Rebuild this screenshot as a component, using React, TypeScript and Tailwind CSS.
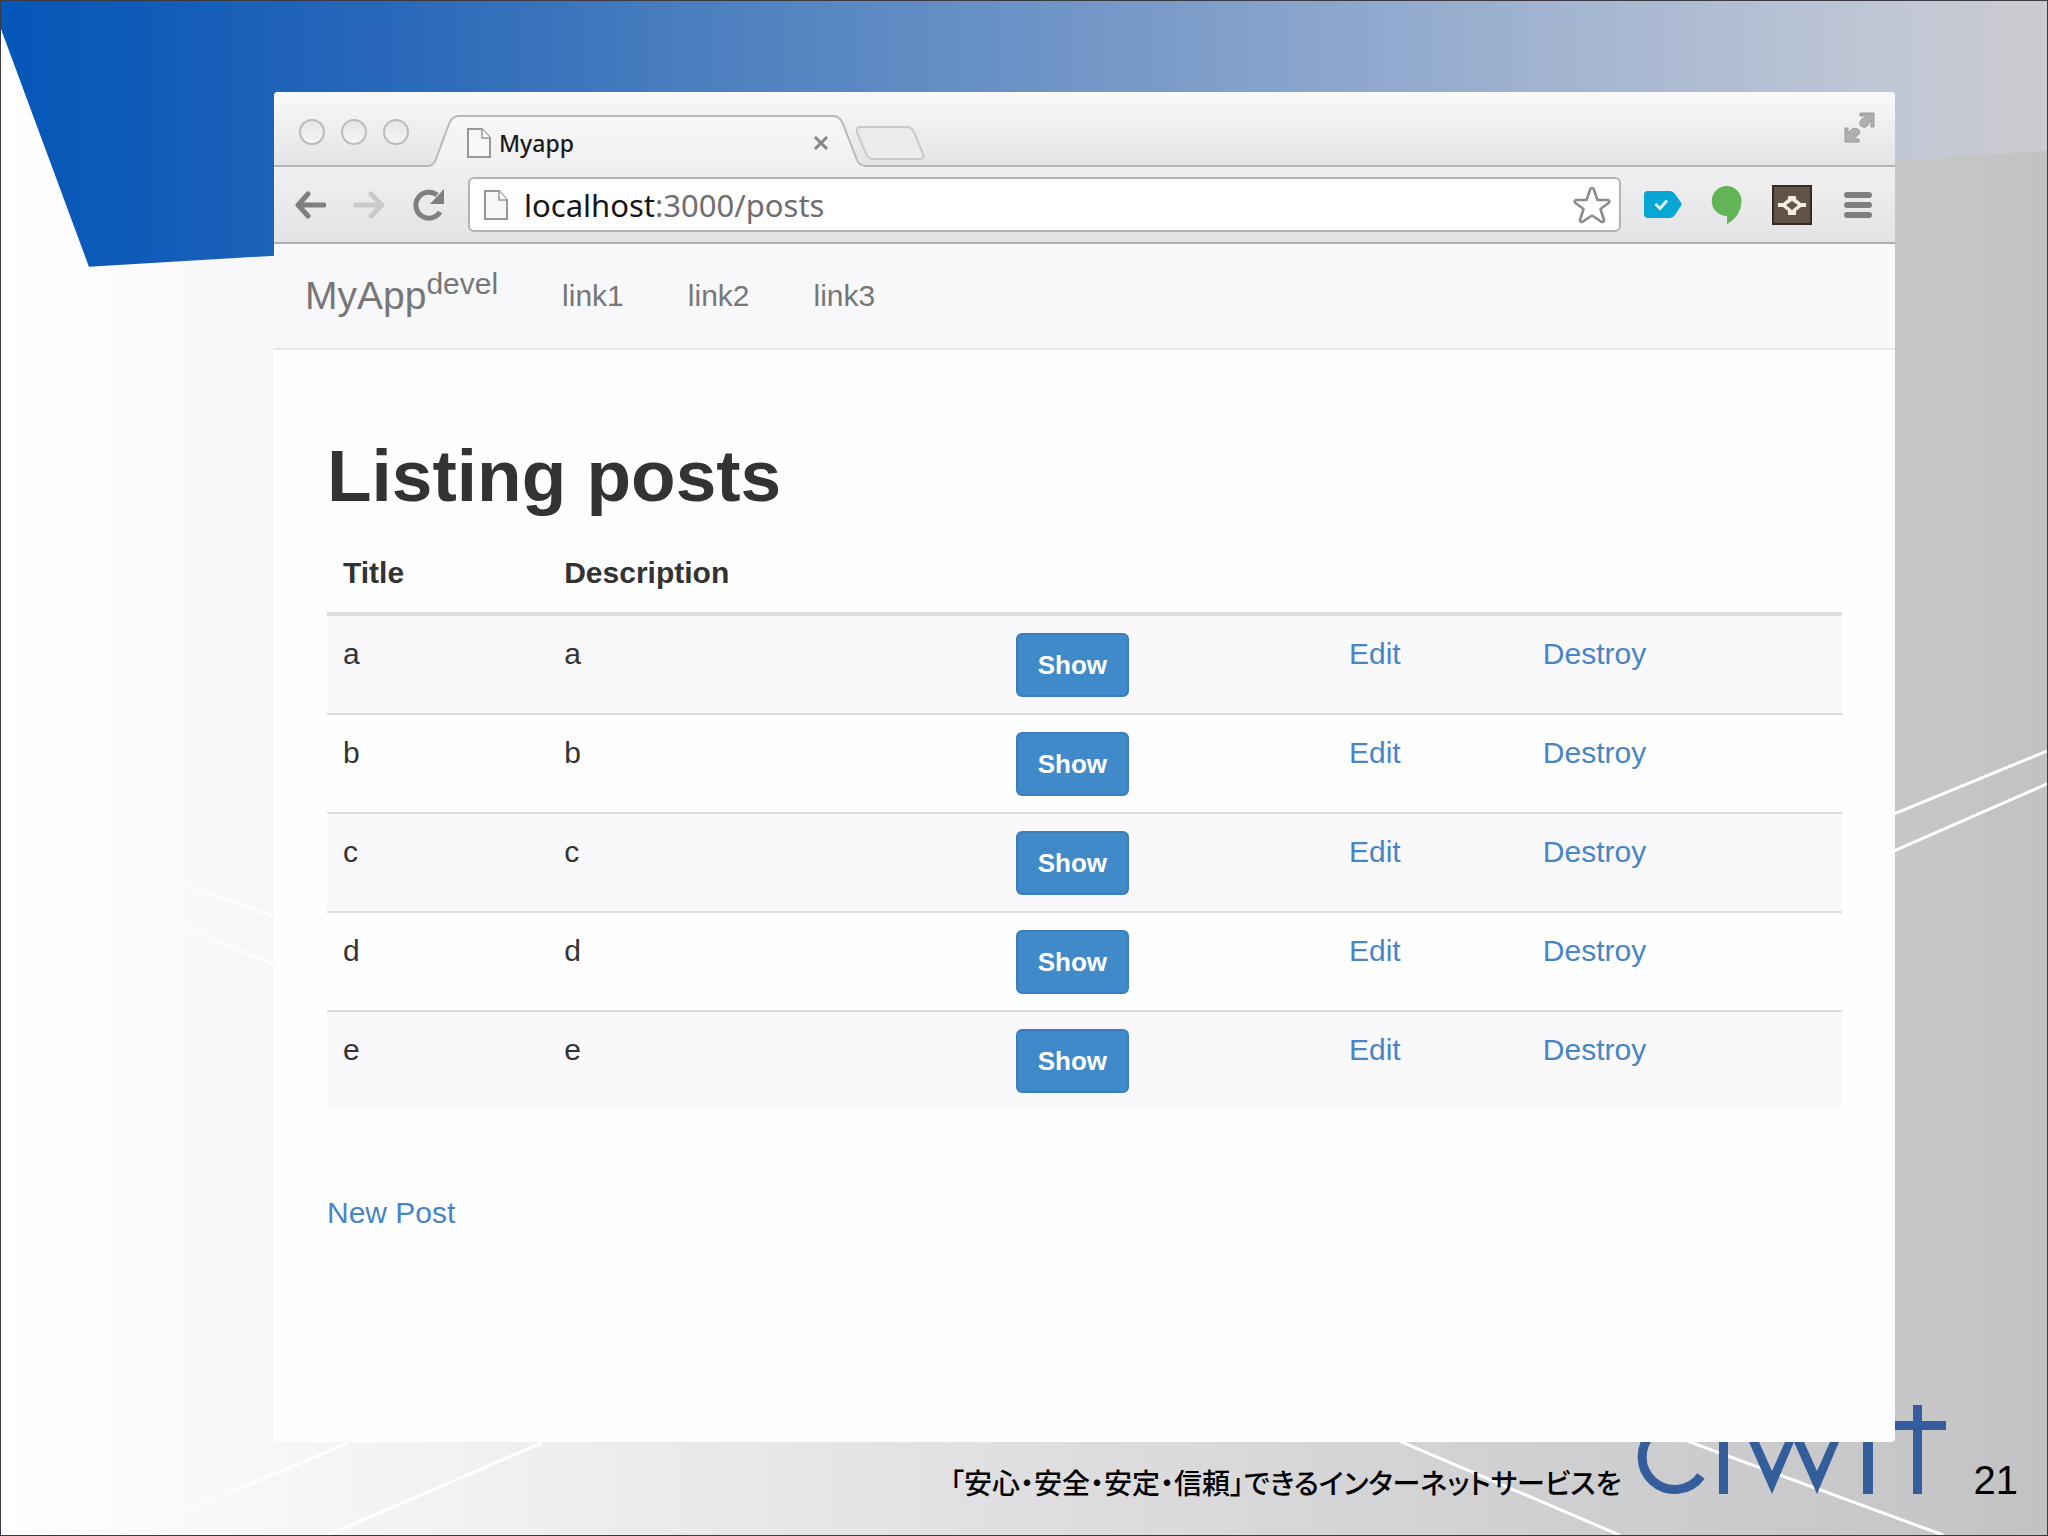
import React from "react";

const posts = ["a", "b", "c", "d", "e"];

function Backdrop() {
  return (
    <svg
      className="absolute inset-0 h-full w-full"
      viewBox="0 0 2048 1536"
      preserveAspectRatio="none"
      aria-hidden="true"
    >
      <defs>
        <linearGradient id="gray" x1="0" x2="1" y1="0" y2="0">
          <stop offset="0" stopColor="#ffffff" />
          <stop offset="0.13" stopColor="#f7f6f9" />
          <stop offset="0.25" stopColor="#f0eff2" />
          <stop offset="0.5" stopColor="#dfdee1" />
          <stop offset="0.75" stopColor="#d0cfd2" />
          <stop offset="0.92" stopColor="#c8c7ca" />
          <stop offset="1" stopColor="#c2c1c4" />
        </linearGradient>
        <linearGradient id="blue" x1="0" x2="1" y1="0" y2="0">
          <stop offset="0" stopColor="#0457b8" />
          <stop offset="0.06" stopColor="#0e5ab8" />
          <stop offset="0.2" stopColor="#2b69b9" />
          <stop offset="0.35" stopColor="#4d80bf" />
          <stop offset="0.55" stopColor="#7699c8" />
          <stop offset="0.75" stopColor="#a0b3d0" />
          <stop offset="0.92" stopColor="#bfc7d5" />
          <stop offset="1" stopColor="#cdcbd0" />
        </linearGradient>
        <linearGradient id="fade" gradientUnits="userSpaceOnUse" x1="120" x2="274" y1="0" y2="0">
          <stop offset="0" stopColor="#ffffff" stopOpacity="0" />
          <stop offset="1" stopColor="#ffffff" />
        </linearGradient>
      </defs>
      <rect width="2048" height="1536" fill="url(#gray)" />
      <path d="M0 0H2048V150L1895 160L274 255L88 266L0 28Z" fill="url(#blue)" />
      <g fill="none" strokeWidth="3">
        <path d="M129 865L274 917M140 910L274 965M348 1444L130 1534" stroke="url(#fade)" />
        <path
          d="M541 1444L327 1536M1895 814L2048 751M1895 851L2048 784M1400 1442L1620 1536M1688 1442L1944 1536"
          stroke="#ffffff"
        />
      </g>
    </svg>
  );
}

function FileIcon() {
  return (
    <svg className="h-8 w-6 shrink-0" viewBox="0 0 24 32" fill="#f8f8f8" stroke="#979799" strokeWidth="2" aria-hidden="true">
      <path d="M1 2H15L23 11V30H1Z" />
      <path d="M15 2V11H23" fill="#fff" strokeWidth="1.5" />
    </svg>
  );
}

function TabStrip() {
  return (
    <header className="flex h-[75px] items-end bg-linear-to-b from-[#f9f9f9] to-[#e4e3e5] shadow-[inset_0_-2px_0_#b5b4b6]">
      <div className="flex gap-4 pb-[22px] pl-[25px]">
        {["Close window", "Minimize window", "Zoom window"].map((label) => (
          <button
            key={label}
            aria-label={label}
            className="size-[26px] rounded-full border-2 border-[#bbbabc] bg-linear-to-b from-[#e6e5e7] to-[#f5f4f6]"
          />
        ))}
      </div>
      <div className="relative ml-5 flex h-[52px] w-[436px] items-center pt-[3px] pr-9 pl-[38px]">
        <svg className="absolute inset-0 h-full w-full" viewBox="0 0 436 52" aria-hidden="true">
          <defs>
            <linearGradient id="tab" x1="0" x2="0" y1="0" y2="1">
              <stop offset="0" stopColor="#f7f7f8" />
              <stop offset="1" stopColor="#f0eff1" />
            </linearGradient>
          </defs>
          <path
            d="M0 52V51Q5 50 7 44L20 9Q23 1 30 1H404Q411 1 414 9L428 45Q430 50 436 51V52Z"
            fill="url(#tab)"
          />
          <path
            d="M0 51Q5 50 7 44L20 9Q23 1 30 1H404Q411 1 414 9L428 45Q430 50 436 51"
            fill="none"
            stroke="#b9b8ba"
            strokeWidth="2"
          />
        </svg>
        <span className="relative flex grow items-center gap-2">
          <FileIcon />
          <span className="font-['Noto_Sans',sans-serif] text-[23px] leading-8 font-medium text-[#1a1a1a]">Myapp</span>
        </span>
        <button aria-label="Close tab" className="relative">
          <svg className="size-4" viewBox="0 0 16 16" stroke="#868587" strokeWidth="3" aria-hidden="true">
            <path d="M2 2L14 14M14 2L2 14" />
          </svg>
        </button>
      </div>
      <button aria-label="New tab" className="mb-[7px] -ml-[9px]">
        <svg className="h-[34px] w-[70px]" viewBox="0 0 70 34" fill="#ebeaec" stroke="#c9c8ca" strokeWidth="2" aria-hidden="true">
          <path d="M5 1H50Q56 1 58 6L67 28Q69 33 64 33H17Q12 33 10 28L1 6Q-1 1 5 1Z" />
        </svg>
      </button>
      <button aria-label="Enter full screen" className="mr-5 mb-6 ml-auto">
        <svg className="size-[31px]" viewBox="0 0 31 31" fill="#b0afb1" stroke="#9a999b" strokeWidth="1" aria-hidden="true">
          <path d="M16 1H30V15H27V8L24 13Q21 17 17 14Q14 11 18 7L23 4H16Z" />
          <path d="M1 16H4V21L8 17Q12 15 15 18Q17 21 13 24L9 27H15V30H1Z" />
        </svg>
      </button>
    </header>
  );
}

function Toolbar() {
  return (
    <div className="flex items-center border-b-2 border-[#aeadaf] bg-linear-to-b from-[#f0eff1] to-[#e4e3e5] py-[10px] pr-[23px] pl-5">
      <button aria-label="Back">
        <svg className="size-8" viewBox="0 0 32 32" fill="none" stroke="#7f7e80" strokeWidth="5" strokeLinecap="round" strokeLinejoin="round" aria-hidden="true">
          <path d="M30 16H5M14 5L4 16L14 27" />
        </svg>
      </button>
      <button aria-label="Forward" disabled className="ml-[27px]">
        <svg className="size-8" viewBox="0 0 32 32" fill="none" stroke="#cac9cb" strokeWidth="5" strokeLinecap="round" strokeLinejoin="round" aria-hidden="true">
          <path d="M3 16H27M18 5L29 16L18 27" />
        </svg>
      </button>
      <button aria-label="Reload" className="ml-[27px]">
        <svg className="size-[34px]" viewBox="0 0 34 34" aria-hidden="true">
          <path d="M28 24A13 13 0 1 1 25 7" fill="none" stroke="#7f7e80" strokeWidth="5" />
          <path d="M32 1V16H18Z" fill="#7f7e80" />
        </svg>
      </button>
      <form className="ml-[22px] flex h-[55px] grow items-center rounded-md border-2 border-[#b3b2b4] bg-white pr-2 pl-[14px]">
        <FileIcon />
        <label className="ml-4 flex grow items-center font-['Noto_Sans',sans-serif] text-[31px] leading-[42px] text-[#161616]">
          <span>localhost</span>
          <input
            aria-label="Address"
            defaultValue=":3000/posts"
            className="w-0 grow bg-transparent text-[#6f6e70] outline-none"
          />
        </label>
        <button type="button" aria-label="Bookmark this page">
          <svg className="size-[38px]" viewBox="0 0 38 38" fill="#fff" stroke="#8d8c8e" strokeWidth="2.6" strokeLinejoin="round" aria-hidden="true">
            <path d="M19 2Q20.500 2 21 4L24.500 14H35Q37.500 15 35.500 17L27.500 23L31 34Q31 37 28 35.500L19 29.500L10 35.500Q7 37 7 34L10.500 23L2.500 17Q0.500 15 3 14H13.500L17 4Q17.500 2 19 2Z" />
          </svg>
        </button>
      </form>
      <div className="ml-[22px] flex items-center">
        <button aria-label="Tag extension">
          <svg className="h-[27px] w-10" viewBox="0 0 40 27" aria-hidden="true">
            <path d="M5 0H27Q30 0 32 3L39 13L32 24Q30 27 27 27H5Q1 27 1 23V4Q1 0 5 0Z" fill="#06a7d4" />
            <path d="M12.500 13L17 17.500L24 9.500" fill="none" stroke="#dff4fb" strokeWidth="3" />
          </svg>
        </button>
        <button aria-label="Hangouts" className="ml-7">
          <svg className="h-[38px] w-[31px]" viewBox="0 0 31 38" fill="#62b556" aria-hidden="true">
            <path d="M15.500 0A15 15 0 0 1 30.500 15C30.500 25 25 33 16 38V30A15 15 0 0 1 15.500 0Z" />
          </svg>
        </button>
        <button aria-label="Diamond extension" className="ml-[30px]">
          <svg className="size-10" viewBox="0 0 40 40" aria-hidden="true">
            <rect x="1" y="1" width="38" height="38" fill="#61524a" stroke="#352c28" strokeWidth="2" />
            <path
              d="M16 11H24V14L29 18H34V22H29L24 26V30H16V26L11 22H6V18H11L16 14ZM20 16L14 20L20 25L26 20Z"
              fill="#f6ede4"
              fillRule="evenodd"
            />
          </svg>
        </button>
        <button aria-label="Menu" className="ml-8">
          <svg className="size-7" viewBox="0 0 28 28" stroke="#7f7e80" strokeWidth="6" strokeLinecap="round" aria-hidden="true">
            <path d="M3 4H25M3 14H25M3 24H25" />
          </svg>
        </button>
      </div>
    </div>
  );
}

function Navbar() {
  return (
    <nav className="flex h-[106px] items-center border-b-2 border-[#e7e6e8] bg-[#f8f7f9] pl-[31px] text-[#777777]">
      <a href="#home" className="text-[39px] leading-[56px]">
        MyApp<sup className="text-[30px]">devel</sup>
      </a>
      <ul className="ml-16 flex gap-16 text-[30px] leading-10">
        {["link1", "link2", "link3"].map((link) => (
          <li key={link}>
            <a href={`#${link}`}>{link}</a>
          </li>
        ))}
      </ul>
    </nav>
  );
}

function PostsTable() {
  return (
    <table className="mt-5 w-full table-fixed border-collapse text-left">
      <colgroup>
        <col className="w-[14.6%]" />
        <col className="w-[29.8%]" />
        <col className="w-[22%]" />
        <col className="w-[12.8%]" />
        <col className="w-[20.8%]" />
      </colgroup>
      <thead>
        <tr className="border-b-4 border-[#dddcde]">
          <th className="px-4 pt-4 pb-[18px] font-bold">Title</th>
          <th className="px-4 pt-4 pb-[18px] font-bold">Description</th>
          <th colSpan={3} aria-label="Actions" />
        </tr>
      </thead>
      <tbody>
        {posts.map((post) => (
          <tr key={post} className="border-t-2 border-[#dddcde] align-top first:border-t-0 odd:bg-[#f9f8fa]">
            <td className="px-4 pt-[17px] pb-4">{post}</td>
            <td className="px-4 pt-[17px] pb-4">{post}</td>
            <td className="px-4 pt-[17px] pb-4">
              <button className="block h-16 rounded-md border-2 border-[#3a7fbd] bg-[#408aca] px-5 text-[26px] leading-9 font-bold text-white">
                Show
              </button>
            </td>
            <td className="px-4 pt-[17px] pb-4">
              <a href={`#edit-${post}`} className="text-[#4785c4]">Edit</a>
            </td>
            <td className="px-4 pt-[17px] pb-4">
              <a href={`#destroy-${post}`} className="text-[#4785c4]">Destroy</a>
            </td>
          </tr>
        ))}
      </tbody>
    </table>
  );
}

function Logo() {
  return (
    <svg className="h-[52px] w-[308px] overflow-visible" viewBox="0 0 308 52" fill="#345d9c" role="img" aria-label="ciwit">
      <path d="M63 34A32.500 32.500 0 1 1 63 -4" fill="none" stroke="#345d9c" strokeWidth="9" />
      <path d="M81 0H90V52H81Z" />
      <path d="M111 0H121L134 29L147 0H156L134 52Z" />
      <path d="M156 0H166L179 29L192 0H201L179 52Z" />
      <path d="M225 0H235V52H225Z" />
      <path d="M275 -37H284V-21H308V-12H284V52H275V-12H250V-21H275Z" />
    </svg>
  );
}

export default function App() {
  return (
    <div className="relative flex min-h-screen flex-col border border-[#3a3a44] font-['Liberation_Sans',Arial,sans-serif]">
      <Backdrop />
      <main className="relative z-10 mt-[91px] mr-[152px] ml-[273px] overflow-hidden rounded-sm bg-[#fefefe] text-[30px] leading-[42px] text-[#333333]">
        <TabStrip />
        <Toolbar />
        <Navbar />
        <section className="px-[53px] pt-[86px] pb-[208px]">
          <h1 className="text-[73px] leading-[80px] font-bold">Listing posts</h1>
          <PostsTable />
          <p className="mt-[83px]">
            <a href="#new" className="text-[#4785c4]">New Post</a>
          </p>
        </section>
      </main>
      <footer className="relative flex h-[90px] items-baseline justify-end pr-[29px] text-black">
        <p className="mr-4 font-['Noto_Sans_CJK_JP',sans-serif] text-[28px] leading-none font-medium [font-feature-settings:'palt']" lang="ja">
          「安心・安全・安定・信頼」できるインターネットサービスを
        </p>
        <Logo />
        <span className="ml-7 text-[40px] leading-none">21</span>
      </footer>
    </div>
  );
}
